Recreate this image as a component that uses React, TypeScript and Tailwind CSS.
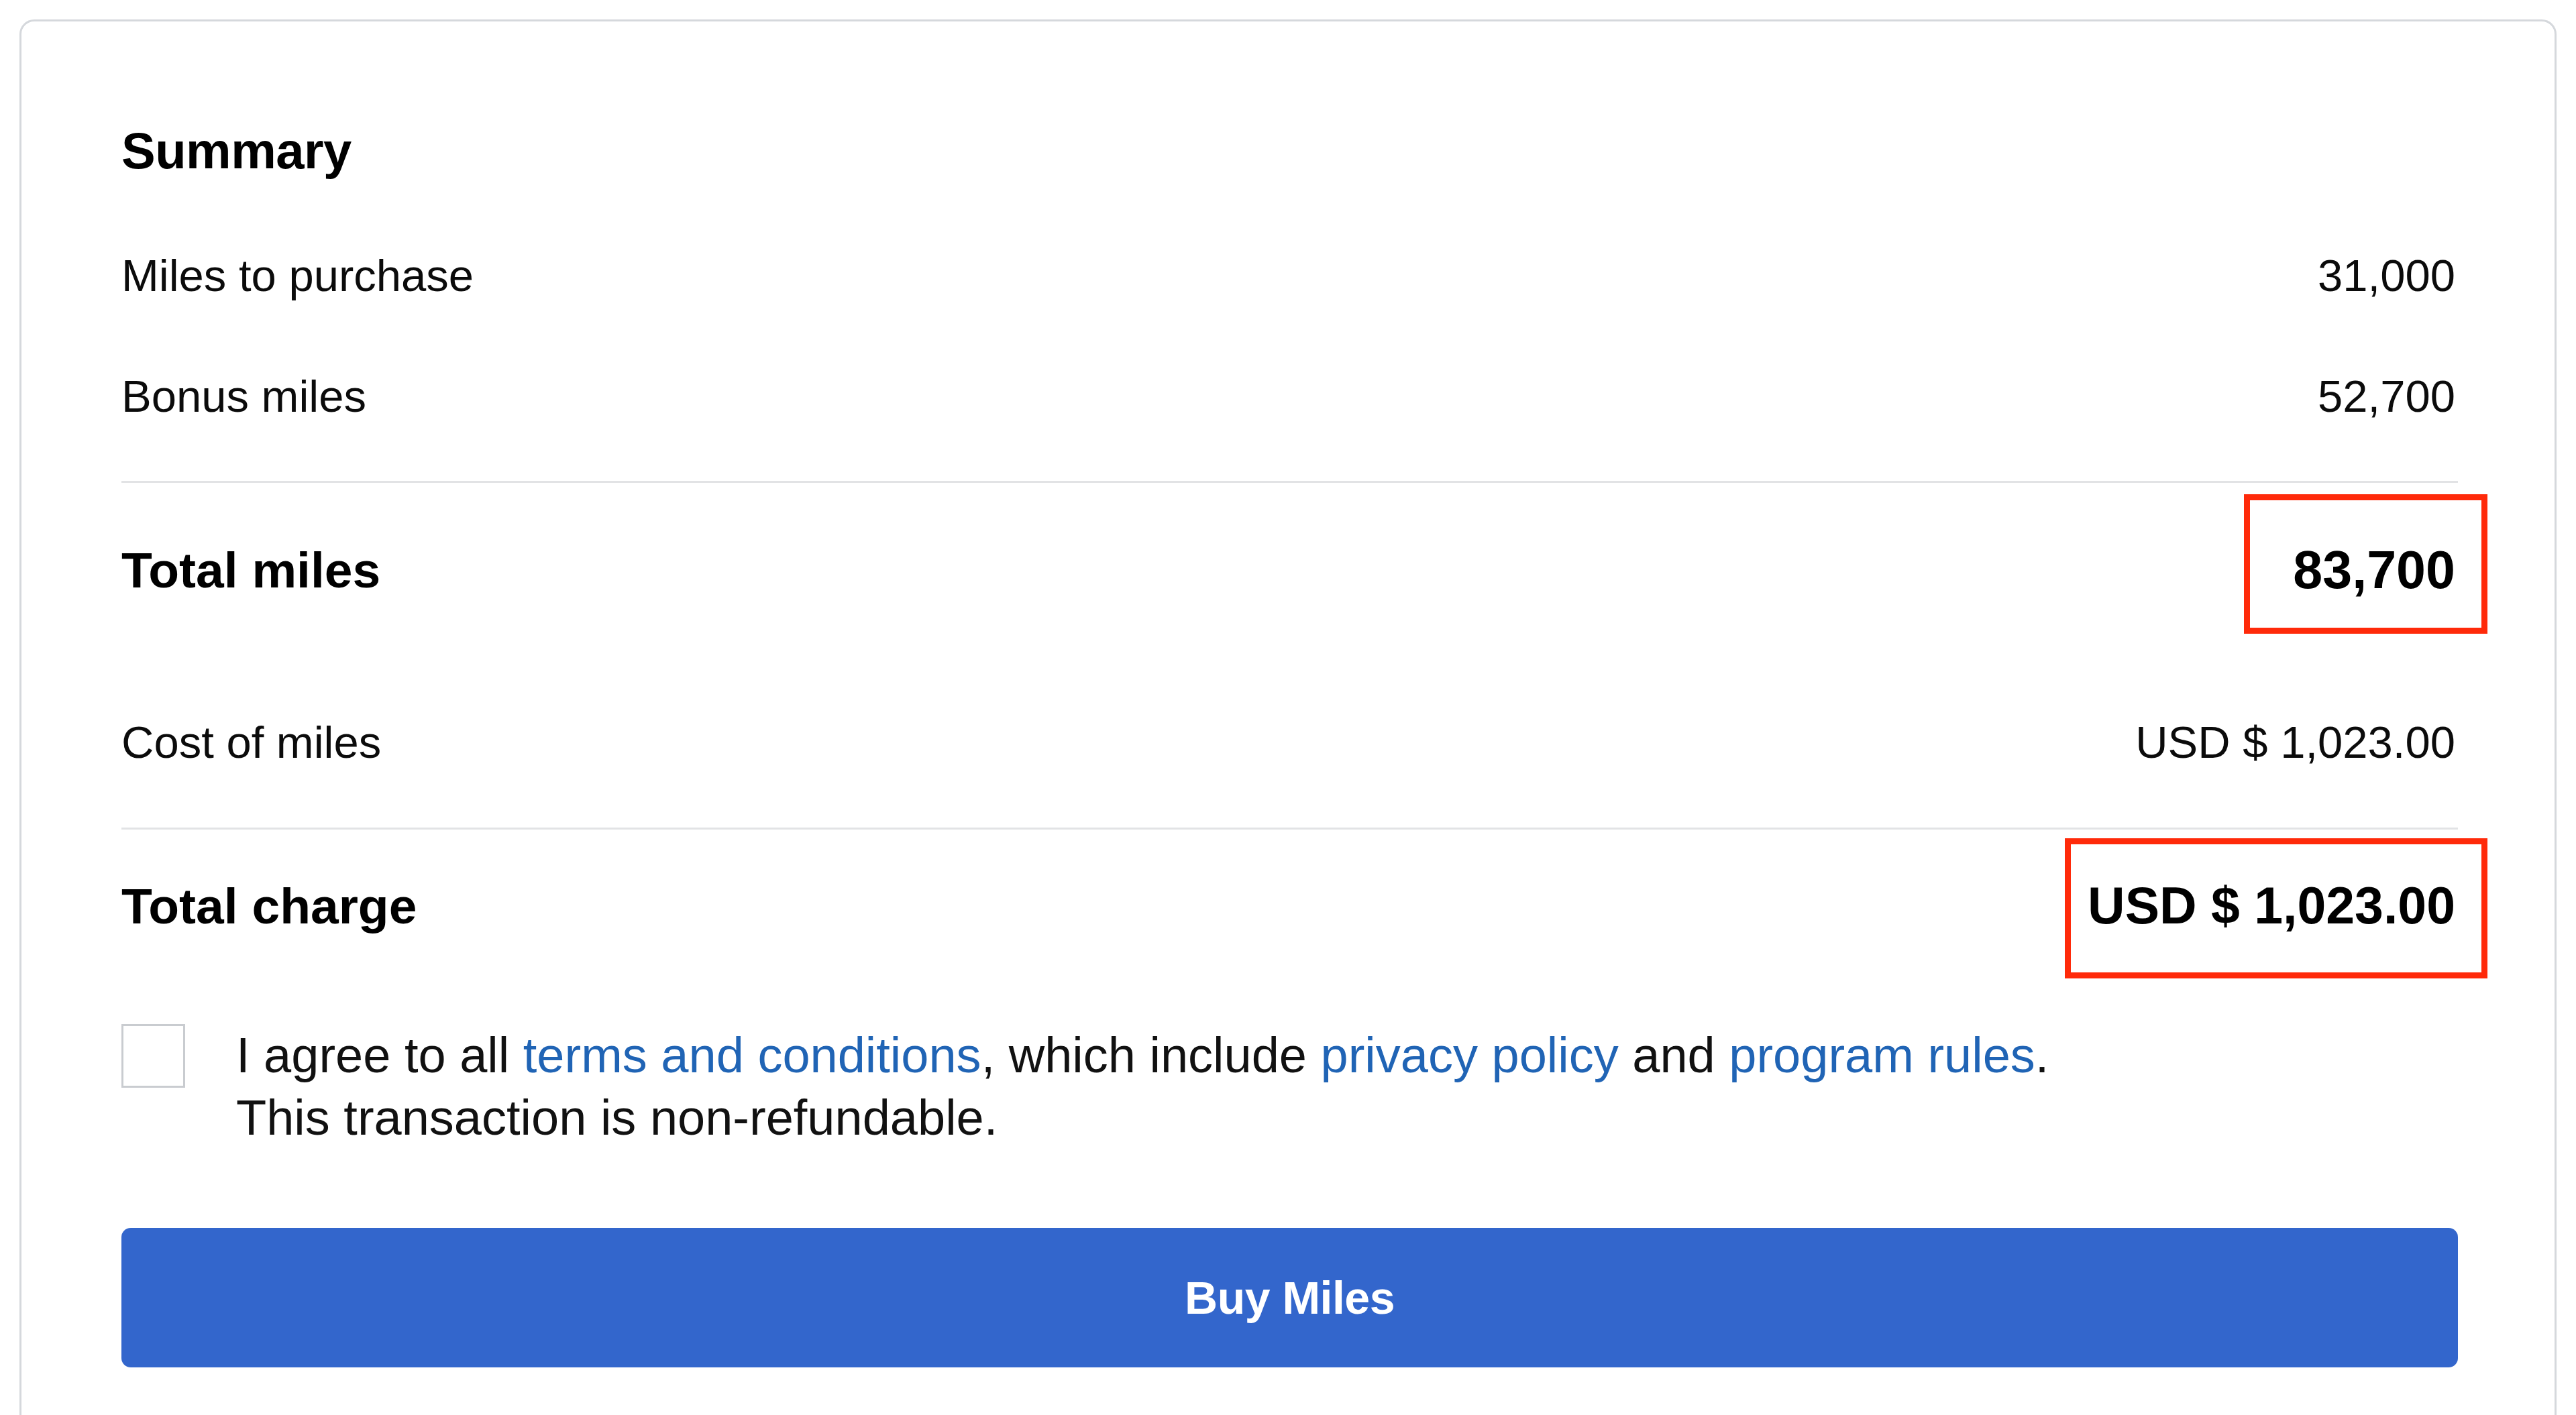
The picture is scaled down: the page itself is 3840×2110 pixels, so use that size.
import React from 'react';

const rows = [
  { label: 'Miles to purchase', value: '31,000' },
  { label: 'Bonus miles', value: '52,700' },
];

function Row({ label, value, className }: { label: string; value: string; className: string }) {
  return (
    <div className={`flex items-center justify-between text-[67px] text-[#0b0b0b] ${className}`}>
      <span>{label}</span>
      <span className="pr-[4px]">{value}</span>
    </div>
  );
}

export default function App() {
  return (
    <div className="min-h-screen bg-white px-[29px] pt-[29px] font-['Liberation_Sans',Arial,sans-serif]">
      <div className="rounded-[22px] border-[3px] border-[#d5d8dc] pl-[149px] pr-[144px] pt-[148px] pb-[140px]">
        <h2 className="mb-[51px] h-[90px] text-[76px] leading-[90px] font-bold tracking-[-0.5px] text-black">Summary</h2>

        {rows.map(r => (
          <Row key={r.label} label={r.label} value={r.value} className="h-[180px]" />
        ))}

        <div className="mt-[36px] h-[3px] bg-[#e2e3e5]" />

        <div className="relative flex h-[260px] items-center justify-between text-black">
          <span className="text-[75px] font-bold">Total miles</span>
          <span className="pr-[4px] text-[79px] font-bold">83,700</span>
          <div className="absolute right-[-44px] top-[17px] bottom-[35px] w-[363px] border-[9px] border-[#ff2a0a]" />
        </div>

        <Row label="Cost of miles" value="USD $ 1,023.00" className="h-[254px]" />

        <div className="h-[3px] bg-[#e2e3e5]" />

        <div className="relative flex h-[228px] items-center justify-between text-black">
          <span className="text-[75px] font-bold">Total charge</span>
          <span className="pr-[4px] text-[77px] font-bold">USD $ 1,023.00</span>
          <div className="absolute right-[-44px] top-[13px] bottom-[6px] w-[630px] border-[9px] border-[#ff2a0a]" />
        </div>

        <div className="mt-[62px] flex items-start gap-[76px]">
          <div className="h-[95px] w-[95px] shrink-0 border-[3px] border-[#c9ccd0] bg-white" />
          <p className="text-[74px] leading-[93px] text-[#111]">
            I agree to all <a className="text-[#2064b5]">terms and conditions</a>, which include{' '}
            <a className="text-[#2064b5]">privacy policy</a> and <a className="text-[#2064b5]">program rules</a>.
            <br />
            This transaction is non-refundable.
          </p>
        </div>

        <button className="mt-[118px] flex h-[208px] w-full items-center justify-center rounded-[14px] bg-[#3366cc] text-[68px] font-bold tracking-[-0.5px] text-white">
          Buy Miles
        </button>
      </div>
    </div>
  );
}
